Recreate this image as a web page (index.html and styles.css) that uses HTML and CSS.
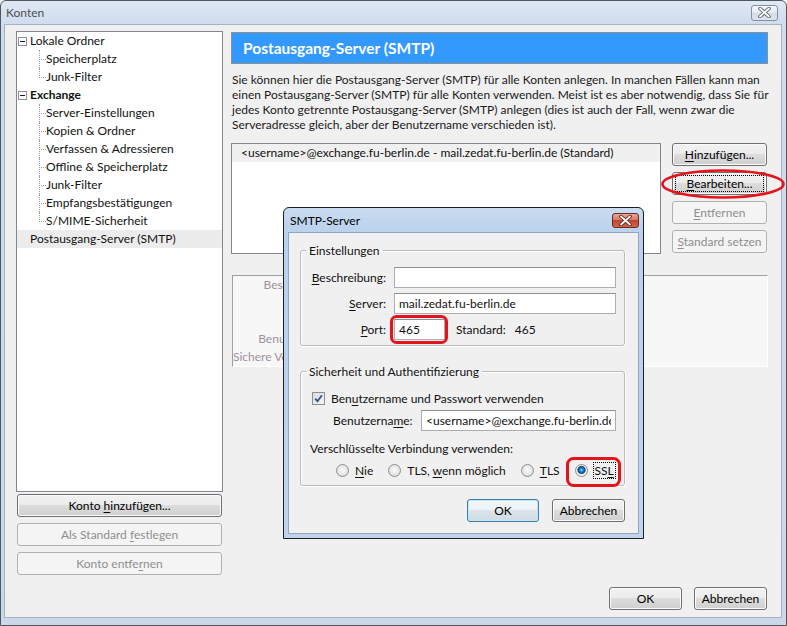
FILE: index.html
```html
<!DOCTYPE html>
<html lang="de">
<head>
<meta charset="utf-8">
<title>Konten</title>
<link rel="stylesheet" href="styles.css">
</head>
<body>
<div class="window">
  <div class="titlebar">
    <span class="title">Konten</span>
    <span class="close">
      <svg width="17" height="11" viewBox="0 0 17 11"><path d="M4 1.5 L13 9.5 M13 1.5 L4 9.5" stroke="#5d6670" stroke-width="3.6" stroke-linecap="round"/><path d="M4 1.5 L13 9.5 M13 1.5 L4 9.5" stroke="#fff" stroke-width="1.7" stroke-linecap="round"/></svg>
    </span>
  </div>
  <div class="client">
    <div class="main">
      <div class="leftcol">
        <div class="tree">
          <div class="row top"><span class="exp"></span>Lokale Ordner</div>
          <div class="row child">Speicherplatz</div>
          <div class="row child last">Junk-Filter</div>
          <div class="row top bold"><span class="exp"></span>Exchange</div>
          <div class="row child">Server-Einstellungen</div>
          <div class="row child">Kopien &amp; Ordner</div>
          <div class="row child">Verfassen &amp; Adressieren</div>
          <div class="row child">Offline &amp; Speicherplatz</div>
          <div class="row child">Junk-Filter</div>
          <div class="row child">Empfangsbestätigungen</div>
          <div class="row child last">S/MIME-Sicherheit</div>
          <div class="row top sel">Postausgang-Server (SMTP)</div>
        </div>
        <button class="btn wide">Konto <u>h</u>inzufügen...</button>
        <button class="btn wide" disabled>Als Standard <u>f</u>estlegen</button>
        <button class="btn wide" disabled>Konto entfe<u>r</u>nen</button>
      </div>
      <div class="rightcol">
        <div class="header">Postausgang-Server (SMTP)</div>
        <p class="desc">Sie können hier die Postausgang-Server (SMTP) für alle Konten anlegen. In manchen Fällen kann man<br>einen Postausgang-Server (SMTP) für alle Konten verwenden. Meist ist es aber notwendig, dass Sie für<br>jedes Konto getrennte Postausgang-Server (SMTP) anlegen (dies ist auch der Fall, wenn zwar die<br>Serveradresse gleich, aber der Benutzername verschieden ist).</p>
        <div class="listrow">
          <div class="listbox">
            <div class="item">&lt;username&gt;@exchange.fu-berlin.de - mail.zedat.fu-berlin.de (Standard)</div>
          </div>
          <div class="btncol">
            <button class="btn"><u>H</u>inzufügen...</button>
            <button class="btn focus"><u>B</u>earbeiten...</button>
            <button class="btn" disabled><u>E</u>ntfernen</button>
            <button class="btn" disabled><u>S</u>tandard setzen</button>
          </div>
        </div>
        <div class="details">
          <div class="dgrid">
            <span>Beschreibung:</span>
            <span>Server:</span>
            <span>Port:</span>
            <span>Benutzername:</span>
            <span>Sichere Verbindung:</span>
          </div>
        </div>
      </div>
    </div>
    <div class="footer">
      <button class="btn foot">OK</button>
      <button class="btn foot">Abbrechen</button>
    </div>
  </div>

  <div class="dialog">
    <div class="dtitlebar">
      <span class="dtitle">SMTP-Server</span>
      <span class="dclose">
        <svg width="17" height="11" viewBox="0 0 17 11"><path d="M4 1.5 L13 9.5 M13 1.5 L4 9.5" stroke="#5a2018" stroke-width="3.6" stroke-linecap="round"/><path d="M4 1.5 L13 9.5 M13 1.5 L4 9.5" stroke="#fff" stroke-width="1.8" stroke-linecap="round"/></svg>
      </span>
    </div>
    <div class="dbody">
      <fieldset class="group g1">
        <legend>Einstellungen</legend>
        <div class="fgrid">
          <label class="flabel"><u>B</u>eschreibung:</label>
          <input class="field" type="text" value="">
          <label class="flabel"><u>S</u>erver:</label>
          <input class="field" type="text" value="mail.zedat.fu-berlin.de">
          <label class="flabel"><u>P</u>ort:</label>
          <div class="portrow">
            <input class="field port" type="text" value="465">
            <span class="std">Standard:</span>
            <span class="stdval">465</span>
          </div>
        </div>
      </fieldset>
      <fieldset class="group g2">
        <legend>Sicherheit und Authentifizierung</legend>
        <div class="checkrow">
          <span class="check"><svg width="11" height="11" viewBox="0 0 11 11"><path d="M2.2 5.6 L4.5 8.2 L8.9 2.2" fill="none" stroke="#3f5586" stroke-width="1.9"/></svg></span>
          <span>Ben<u>u</u>tzername und Passwort verwenden</span>
        </div>
        <div class="userrow">
          <label class="ulabel">Benutzerna<u>m</u>e:</label>
          <input class="field user" type="text" value="&lt;username&gt;@exchange.fu-berlin.de">
        </div>
        <div class="enc">Verschlüsselte Verbindung verwenden:</div>
        <div class="radios">
          <span class="ropt"><span class="radio"></span><span><u>N</u>ie</span></span>
          <span class="ropt"><span class="radio"></span><span>TLS, <u>w</u>enn möglich</span></span>
          <span class="ropt"><span class="radio"></span><span><u>T</u>LS</span></span>
          <span class="ropt"><span class="radio on"></span><span class="focusbox">SS<u>L</u></span></span>
        </div>
      </fieldset>
      <div class="dbuttons">
        <button class="btn ok default">OK</button>
        <button class="btn cancel">Abbrechen</button>
      </div>
    </div>
  </div>

  <svg class="annot" width="787" height="626" viewBox="0 0 787 626">
    <ellipse cx="723" cy="184" rx="60.5" ry="13.5" fill="none" stroke="#e5131c" stroke-width="2.6"/>
    <rect x="391.5" y="316.5" width="55" height="26" rx="5" fill="none" stroke="#e5131c" stroke-width="3"/>
    <rect x="567.5" y="458.5" width="52" height="27" rx="6" fill="none" stroke="#e5131c" stroke-width="3"/>
  </svg>
</div>
</body>
</html>
```

FILE: styles.css
```css
* { box-sizing: border-box; }
html, body { margin: 0; padding: 0; }
body {
  width: 787px;
  height: 626px;
  overflow: hidden;
  background: #ffffff;
  font-family: Lato, "Open Sans", sans-serif;
  font-size: 12px;
  color: #111;
}
u { text-decoration: underline; text-underline-offset: 2px; }

.window {
  position: relative;
  width: 787px;
  height: 626px;
  border: 1px solid #4f565e;
  border-radius: 6px 6px 0 0;
  background: linear-gradient(#dfe9f5 0, #cfdcec 24px, #cad8e9 100%);
  padding: 0 4px 7px 3px;
  display: flex;
  flex-direction: column;
}
.titlebar {
  height: 23px;
  flex: none;
  display: flex;
  align-items: center;
  justify-content: space-between;
  padding: 0 4px 0 2px;
}
.title { color: #4a4f55; font-size: 12px; }
.close {
  width: 27px;
  height: 16px;
  border: 1px solid #8790a0;
  border-radius: 3px;
  background: linear-gradient(#f4f7fb 0, #e2e8ef 50%, #d3dbe5 50%, #dde4ec 100%);
  display: flex;
  align-items: center;
  justify-content: center;
}

.client {
  flex: 1;
  background: #f0f0f0;
  border: 1px solid #a3b3c6;
  padding: 6px 13px 0 11px;
  display: flex;
  flex-direction: column;
}
.main {
  height: 545px;
  flex: none;
  display: flex;
  gap: 8px;
}
.leftcol {
  width: 207px;
  display: flex;
  flex-direction: column;
}
.tree {
  height: 461px;
  border: 1px solid #828790;
  background: #fff;
}
.row {
  position: relative;
  height: 18px;
  line-height: 18px;
  white-space: nowrap;
  color: #111;
}
.row.top { padding-left: 13px; }
.row.bold { font-weight: bold; }
.row.sel { background: #ececec; }
.exp {
  position: absolute;
  left: 1px;
  top: 5px;
  width: 9px;
  height: 9px;
  border: 1px solid #8d8db0;
  background: #fff;
}
.exp::after {
  content: "";
  position: absolute;
  left: 1px;
  top: 3px;
  width: 5px;
  height: 1px;
  background: #1a1a1a;
}
.row.child { padding-left: 29px; }
.row.child::before {
  content: "";
  position: absolute;
  left: 22px;
  top: 0;
  width: 6px;
  height: 9px;
  border-left: 1px dotted #a0a0a0;
  border-bottom: 1px dotted #a0a0a0;
}
.row.child:not(.last)::after {
  content: "";
  position: absolute;
  left: 22px;
  top: 9px;
  bottom: 0;
  border-left: 1px dotted #a0a0a0;
}

.btn {
  height: 23px;
  padding: 0;
  font-family: inherit;
  font-size: 12px;
  color: #000;
  border: 1px solid #707070;
  border-radius: 3px;
  background: linear-gradient(#f2f2f2 0, #ebebeb 50%, #dddddd 50%, #cfcfcf 100%);
  box-shadow: inset 0 0 0 1px #fbfbfb;
  line-height: 20px;
  text-align: center;
}
.btn:disabled {
  border-color: #adb2b5;
  background: #f4f4f4;
  box-shadow: none;
  color: #8f8f8f;
}
.btn.focus { outline: 1px dotted #000; outline-offset: -4px; }
.btn.wide { margin: 0 1px; }
.btn.wide:nth-of-type(1) { margin-top: 2px; }
.btn.wide + .btn.wide { margin-top: 6px; }

.rightcol {
  width: 537px;
  display: flex;
  flex-direction: column;
}
.header {
  height: 32px;
  flex: none;
  background: #3399ff;
  border: 1px solid #8e8f8f;
  color: #fff;
  font-weight: bold;
  font-size: 15.5px;
  line-height: 30px;
  padding-left: 11px;
  margin-top: 1px;
}
.desc {
  margin: 8px 0 0 1px;
  line-height: 15px;
  white-space: nowrap;
  color: #1a1a1a;
}
.listrow {
  margin-top: 11px;
  display: flex;
  gap: 11px;
}
.listbox {
  width: 430px;
  height: 111px;
  border: 1px solid #828790;
  background: #fff;
}
.item {
  height: 18px;
  line-height: 18px;
  background: #f0f0f0;
  padding-left: 9px;
  white-space: nowrap;
  color: #111;
}
.btncol {
  width: 95px;
  display: flex;
  flex-direction: column;
  gap: 6px;
}
.details {
  margin: 21px 0 0 1px;
  height: 92px;
  background: #f7f7f7;
  border: 1px solid;
  border-color: #a0a0a0 #ffffff #ffffff #a0a0a0;
}
.dgrid {
  width: 104px;
  display: grid;
  grid-auto-rows: 18px;
  line-height: 18px;
  text-align: right;
  color: #a0909f;
  white-space: nowrap;
}

.footer {
  margin-top: 11px;
  display: flex;
  justify-content: flex-end;
  gap: 12px;
  padding-right: 1px;
}
.btn.foot { width: 73px; }

/* dialog */
.dialog {
  position: absolute;
  left: 282px;
  top: 206px;
  width: 361px;
  height: 332px;
  border: 1px solid #1e1e1e;
  border-radius: 6px 6px 0 0;
  background: linear-gradient(#cadcf1 0, #b9d1ec 25px, #c0d5ed 100%);
  padding: 0 4px 4px 4px;
  display: flex;
  flex-direction: column;
}
.dtitlebar {
  height: 24px;
  flex: none;
  display: flex;
  align-items: center;
  justify-content: space-between;
  padding-left: 2px;
}
.dtitle { color: #000; font-size: 12px; }
.dclose {
  width: 27px;
  height: 15px;
  border: 1px solid #6b2a22;
  border-radius: 3px;
  background: linear-gradient(#eaa595 0, #d77a66 45%, #c4452f 50%, #d2654a 100%);
  display: flex;
  align-items: center;
  justify-content: center;
}
.dbody {
  flex: 1;
  background: #f0f0f0;
  border: 1px solid #8fa5c0;
  padding: 10px 13px 0 11px;
  display: flex;
  flex-direction: column;
}
.group {
  margin: 0;
  padding: 0;
  border: 1px solid #bababa;
  border-radius: 3px;
  box-shadow: inset 1px 1px 0 #fff, 1px 1px 0 #fff;
  min-width: 0;
}
.group legend {
  margin-left: 5px;
  padding: 0 3px;
  line-height: 15px;
  color: #111;
}
.g2 { margin-top: 18px; padding-bottom: 6px; }
.fgrid {
  display: grid;
  grid-template-columns: 85px 1fr;
  column-gap: 8px;
  row-gap: 5px;
  grid-auto-rows: 21px;
  padding: 9px 8px 5px 0;
  align-items: center;
}
.flabel { text-align: right; white-space: nowrap; color: #111; }
.field {
  height: 21px;
  border: 1px solid #abadb3;
  border-top-color: #8e9096;
  background: #fff;
  font-family: inherit;
  font-size: 12px;
  color: #111;
  padding: 0 4px;
  margin: 0;
  outline: none;
  min-width: 0;
}
.portrow { display: flex; align-items: center; }
.field.port { width: 51px; }
.std { margin-left: 11px; }
.stdval { margin-left: 9px; }
.checkrow {
  margin-top: 10px;
  height: 18px;
  display: flex;
  align-items: center;
  gap: 6px;
  padding-left: 11px;
}
.check {
  width: 13px;
  height: 13px;
  border: 1px solid #8e8f8f;
  background: linear-gradient(135deg, #d9dde3 0, #f4f5f7 100%);
  display: flex;
  align-items: center;
  justify-content: center;
}
.userrow {
  margin-top: 3px;
  display: flex;
  align-items: center;
  height: 21px;
}
.ulabel { width: 120px; padding-left: 32px; white-space: nowrap; flex: none; }
.field.user { flex: 1; margin-right: 8px; }
.enc { margin-top: 10px; padding-left: 9px; line-height: 15px; }
.radios {
  margin-top: 5px;
  height: 18px;
  display: flex;
  align-items: center;
  gap: 15px;
  padding-left: 35px;
}
.ropt { display: flex; align-items: center; gap: 6px; white-space: nowrap; }
.radio {
  width: 13px;
  height: 13px;
  border-radius: 50%;
  border: 1px solid #8e8f8f;
  background: radial-gradient(circle at 50% 45%, #fbfbfb 0, #e6e6e6 55%, #cfcfcf 100%);
  flex: none;
}
.radio.on {
  background: radial-gradient(circle at 50% 45%, #9be0ff 0, #2b8ad2 1.5px, #0d4a88 3.4px, #5b87ad 4px, #f5f5f5 4.6px, #dedede 100%);
}
.focusbox { outline: 1px dotted #000; padding: 0 1px; line-height: 15px; }
.dbuttons {
  margin-top: 13px;
  display: flex;
  justify-content: flex-end;
  gap: 13px;
}
.btn.ok { width: 72px; }
.btn.cancel { width: 73px; }
.btn.default {
  border-color: #3c7fb1;
  box-shadow: inset 0 0 0 1px #c6e6f7;
  background: linear-gradient(#f2f7fa 0, #eaf1f5 50%, #dbe5eb 50%, #cfdbe2 100%);
}

.annot {
  position: absolute;
  left: -1px;
  top: -1px;
  pointer-events: none;
}
```
